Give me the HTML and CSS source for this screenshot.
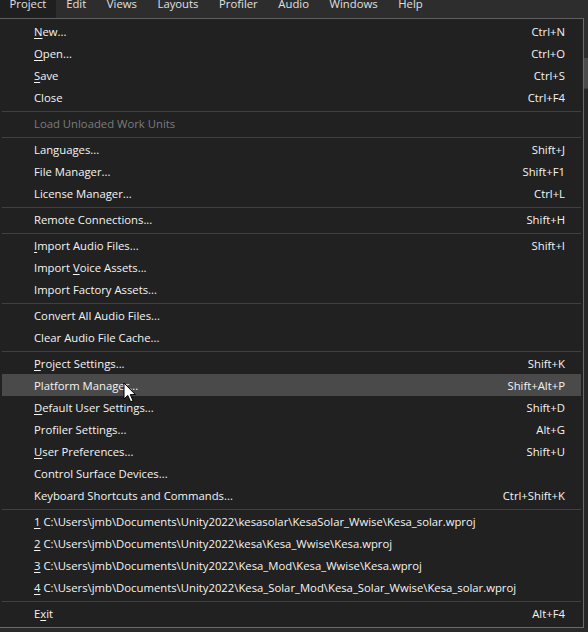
FILE: index.html
```html
<!DOCTYPE html>
<html>
<head>
<meta charset="utf-8">
<link rel="stylesheet" href="styles.css">
</head>
<body>
<div class="app">
  <nav class="menubar">
    <span class="mb-item active">Project</span>
    <span class="mb-item">Edit</span>
    <span class="mb-item">Views</span>
    <span class="mb-item">Layouts</span>
    <span class="mb-item">Profiler</span>
    <span class="mb-item">Audio</span>
    <span class="mb-item">Windows</span>
    <span class="mb-item">Help</span>
  </nav>
  <div class="stage">
    <div class="menu">
      <div class="row"><span class="label"><u>N</u>ew...</span><span class="key">Ctrl+N</span></div>
      <div class="row"><span class="label"><u>O</u>pen...</span><span class="key">Ctrl+O</span></div>
      <div class="row"><span class="label"><u>S</u>ave</span><span class="key">Ctrl+S</span></div>
      <div class="row"><span class="label">Close</span><span class="key">Ctrl+F4</span></div>
      <div class="sep"></div>
      <div class="row disabled"><span class="label">Load Unloaded Work Units</span></div>
      <div class="sep"></div>
      <div class="row"><span class="label">Languages...</span><span class="key">Shift+J</span></div>
      <div class="row"><span class="label">File Manager...</span><span class="key">Shift+F1</span></div>
      <div class="row"><span class="label">License Manager...</span><span class="key">Ctrl+L</span></div>
      <div class="sep"></div>
      <div class="row"><span class="label">Remote Connections...</span><span class="key">Shift+H</span></div>
      <div class="sep"></div>
      <div class="row"><span class="label"><u>I</u>mport Audio Files...</span><span class="key">Shift+I</span></div>
      <div class="row"><span class="label">Import <u>V</u>oice Assets...</span></div>
      <div class="row"><span class="label">Import Factory Assets...</span></div>
      <div class="sep"></div>
      <div class="row"><span class="label">Convert All Audio Files...</span></div>
      <div class="row"><span class="label">Clear Audio File Cache...</span></div>
      <div class="sep"></div>
      <div class="row"><span class="label"><u>P</u>roject Settings...</span><span class="key">Shift+K</span></div>
      <div class="row hover"><span class="label">Platform Manager...</span><span class="key">Shift+Alt+P</span></div>
      <div class="row"><span class="label"><u>D</u>efault User Settings...</span><span class="key">Shift+D</span></div>
      <div class="row"><span class="label">Profiler Settings...</span><span class="key">Alt+G</span></div>
      <div class="row"><span class="label"><u>U</u>ser Preferences...</span><span class="key">Shift+U</span></div>
      <div class="row"><span class="label">Control Surface Devices...</span></div>
      <div class="row"><span class="label">Keyboard Shortcuts and Commands...</span><span class="key">Ctrl+Shift+K</span></div>
      <div class="sep"></div>
      <div class="row"><span class="label"><u>1</u> C:\Users\jmb\Documents\Unity2022\kesasolar\KesaSolar_Wwise\Kesa_solar.wproj</span></div>
      <div class="row"><span class="label"><u>2</u> C:\Users\jmb\Documents\Unity2022\kesa\Kesa_Wwise\Kesa.wproj</span></div>
      <div class="row"><span class="label"><u>3</u> C:\Users\jmb\Documents\Unity2022\Kesa_Mod\Kesa_Wwise\Kesa.wproj</span></div>
      <div class="row"><span class="label"><u>4</u> C:\Users\jmb\Documents\Unity2022\Kesa_Solar_Mod\Kesa_Solar_Wwise\Kesa_solar.wproj</span></div>
      <div class="sep"></div>
      <div class="row"><span class="label">E<u>x</u>it</span><span class="key">Alt+F4</span></div>
    </div>
    <div class="side">
      <div class="side-a"></div>
      <div class="side-b"></div>
      <div class="side-c"></div>
    </div>
  </div>
  <div class="bottom"></div>
  <svg class="cursor" width="14" height="22" viewBox="0 0 14 22">
    <path d="M1 1 L1 17 L4.8 13.4 L7.6 19.8 L10 18.8 L7.3 12.6 L12.4 12.6 Z" fill="#fff" stroke="#000" stroke-width="1" stroke-linejoin="miter"/>
  </svg>
</div>
</body>
</html>
```

FILE: styles.css
```css
* { box-sizing: border-box; }
html, body {
  margin: 0;
  padding: 0;
  background: #2b2b2b;
}
.app {
  position: relative;
  width: 588px;
  height: 632px;
  overflow: hidden;
  font-family: "Open Sans", "Noto Sans", "Liberation Sans", sans-serif;
  font-size: 11.3px;
  color: #f4f4f4;
}
.menubar {
  display: flex;
  height: 18px;
  background: #2d2d2d;
}
.mb-item {
  height: 18px;
  padding: 0 10.3px;
  line-height: 8px;
  color: #e0e0e0;
  white-space: nowrap;
}
.mb-item.active {
  background: #1f1f1f;
  padding: 0 9.5px;
}
.stage {
  display: flex;
  height: 610px;
}
.menu {
  width: 584px;
  background: #212121;
  border-top: 1px solid #5f5f5f;
  border-right: 1px solid #6a6a6a;
  border-bottom: 1px solid #6a6a6a;
  padding: 1px 2px 2px 2px;
  display: flex;
  flex-direction: column;
}
.row {
  display: flex;
  justify-content: space-between;
  align-items: center;
  height: 22px;
  padding: 0 16px 0 32px;
  white-space: nowrap;
}
.row.hover {
  background: #4a4a4a;
}
.row.disabled {
  color: #7c7c7c;
}
.row u {
  text-decoration-thickness: 1px;
  text-underline-offset: 2px;
}
.sep {
  height: 4px;
  padding-top: 3px;
}
.sep::before {
  content: "";
  display: block;
  width: 100%;
  height: 1px;
  background: #404040;
}
.side {
  flex: 1;
  display: flex;
  flex-direction: column;
  background: #2b2b2b;
}
.side-a {
  height: 40px;
  background: #2d2d2d;
}
.side-b {
  height: 30px;
  background: #4a4a4a;
}
.side-c {
  flex: 1;
  background: #262626;
  border-top: 1px solid #3a3a3a;
}
.bottom {
  height: 4px;
  background: #2a2a2a;
}
.cursor {
  position: absolute;
  left: 123px;
  top: 382px;
}
```
